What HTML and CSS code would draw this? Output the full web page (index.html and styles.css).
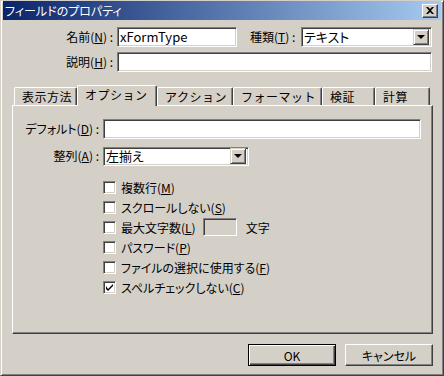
FILE: index.html
```html
<!DOCTYPE html>
<html lang="ja">
  <head>
    <meta charset="UTF-8" />
    <meta name="viewport" content="width=device-width, initial-scale=1.0" />
    <title>フィールドのプロパティ</title>
    <link rel="stylesheet" href="styles.css">
  </head>
  <body>
    <div class="window">
      <div class="titlebar">
        <span class="title">フィールドのプロパティ</span>
        <span class="close-btn">
          <svg width="8" height="7" viewBox="0 0 8 7">
            <path d="M0 0 L2 0 L4 2 L6 0 L8 0 L5 3.5 L8 7 L6 7 L4 5 L2 7 L0 7 L3 3.5 Z" fill="#000" />
          </svg>
        </span>
      </div>

      <div class="content">
        <div class="top-row">
          <label class="label top-label">名前(<u>N</u>) :</label>
          <div class="field name-field">xFormType</div>
          <label class="label type-label">種類(<u>T</u>) :</label>
          <div class="field select type-select">
            <span>テキスト</span>
            <span class="drop-btn"><i class="arrow"></i></span>
          </div>
        </div>
        <div class="top-row second">
          <label class="label top-label">説明(<u>H</u>) :</label>
          <div class="field desc-field"></div>
        </div>

        <!-- Onglets -->
        <div class="tabs">
          <div class="tab t1">表示方法</div>
          <div class="tab t2 active">オプション</div>
          <div class="tab t3">アクション</div>
          <div class="tab t4">フォーマット</div>
          <div class="tab t5">検証</div>
          <div class="tab t6">計算</div>
        </div>

        <div class="panel">
          <div class="panel-row">
            <label class="label panel-label">デフォルト(<u>D</u>) :</label>
            <div class="field default-field"></div>
          </div>
          <div class="panel-row second">
            <label class="label panel-label">整列(<u>A</u>) :</label>
            <div class="field select align-select">
              <span>左揃え</span>
              <span class="drop-btn"><i class="arrow"></i></span>
            </div>
          </div>

          <div class="checks">
            <div class="check-row">
              <span class="checkbox"></span>
              <span>複数行(<u>M</u>)</span>
            </div>
            <div class="check-row">
              <span class="checkbox"></span>
              <span>スクロールしない(<u>S</u>)</span>
            </div>
            <div class="check-row">
              <span class="checkbox"></span>
              <span>最大文字数(<u>L</u>)</span>
              <span class="field max-field"></span>
              <span class="unit">文字</span>
            </div>
            <div class="check-row">
              <span class="checkbox"></span>
              <span>パスワード(<u>P</u>)</span>
            </div>
            <div class="check-row">
              <span class="checkbox"></span>
              <span>ファイルの選択に使用する(<u>F</u>)</span>
            </div>
            <div class="check-row">
              <span class="checkbox checked">
                <svg width="7" height="7" viewBox="0 0 7 7">
                  <path d="M0 2 L0 5 L2 7 L7 2 L7 0 L2 5 Z" fill="#000" />
                </svg>
              </span>
              <span>スペルチェックしない(<u>C</u>)</span>
            </div>
          </div>
        </div>

        <div class="buttons">
          <button class="btn default">OK</button>
          <button class="btn">キャンセル</button>
        </div>
      </div>
    </div>
  </body>
</html>
```

FILE: styles.css
```css
body {
  margin: 0;
  padding: 0;
  font-family: "Noto Sans CJK JP", "Noto Sans", sans-serif;
  font-size: 12px;
  font-feature-settings: "palt";
  color: #000;
  background-color: #d4d0c8;
}
.window {
  width: 444px;
  height: 376px;
  box-sizing: border-box;
  background-color: #d4d0c8;
  border: 1px solid;
  border-color: #d4d0c8 #404040 #404040 #d4d0c8;
  box-shadow: inset 1px 1px #fff, inset -1px -1px #808080;
  overflow: hidden;
}
.titlebar {
  height: 19px;
  margin: 0 2px 0 2px;
  padding: 0 3px 0 2px;
  display: flex;
  align-items: center;
  justify-content: space-between;
  background: linear-gradient(to right, #0a246a, #a6caf0);
  color: #fff;
}
.title {
  font-size: 12px;
  line-height: 19px;
}
.close-btn {
  width: 16px;
  height: 14px;
  box-sizing: border-box;
  background-color: #d4d0c8;
  border: 1px solid;
  border-color: #fff #404040 #404040 #fff;
  box-shadow: inset -1px -1px #808080;
  display: flex;
  align-items: center;
  justify-content: center;
  padding-right: 1px;
}
.content {
  padding: 7px 0 0 11px;
}
.top-row,
.panel-row {
  display: flex;
  align-items: center;
  height: 20px;
}
.top-row.second {
  margin-top: 5px;
}
.label {
  box-sizing: border-box;
  text-align: right;
  white-space: nowrap;
  line-height: 20px;
}
.top-label {
  width: 105px;
  padding-right: 4px;
}
.type-label {
  margin-left: 13px;
  width: 51px;
  text-align: left;
}
.field {
  box-sizing: border-box;
  height: 20px;
  background-color: #fff;
  border: 1px solid;
  border-color: #808080 #fff #fff #808080;
  box-shadow: inset 1px 1px #404040, inset -1px -1px #d4d0c8;
  padding: 0 2px;
  line-height: 18px;
  font-size: 13px;
}
.name-field {
  width: 120px;
}
.type-select {
  width: 131px;
}
.desc-field {
  width: 315px;
}
.select {
  display: flex;
  justify-content: space-between;
  align-items: center;
  padding-right: 2px;
}
.drop-btn {
  width: 16px;
  height: 16px;
  box-sizing: border-box;
  background-color: #d4d0c8;
  border: 1px solid;
  border-color: #d4d0c8 #404040 #404040 #d4d0c8;
  box-shadow: inset 1px 1px #fff, inset -1px -1px #808080;
  display: flex;
  align-items: center;
  justify-content: center;
}
.arrow {
  width: 0;
  height: 0;
  border-left: 4px solid transparent;
  border-right: 4px solid transparent;
  border-top: 4px solid #000;
}
/* Onglets */
.tabs {
  display: flex;
  height: 20px;
  margin-top: 13px;
  padding-left: 2px;
  position: relative;
  z-index: 1;
}
.tab {
  box-sizing: border-box;
  height: 18px;
  margin-top: 2px;
  border-top: 1px solid #fff;
  border-left: 1px solid #fff;
  border-right: 1px solid #404040;
  border-radius: 2px 2px 0 0;
  box-shadow: inset -1px 0 #808080;
  padding-left: 7px;
  line-height: 17px;
  font-size: 12px;
  letter-spacing: 0.5px;
  font-feature-settings: normal;
  background-color: #d4d0c8;
}
.tab.active {
  height: 21px;
  margin-top: 0;
  margin-bottom: -1px;
  padding-left: 7px;
}
.t1 { width: 63px; }
.t2 { width: 80px; }
.t3 { width: 76px; }
.t4 { width: 89px; }
.t5 { width: 53px; }
.t6 { width: 55px; }
.panel {
  width: 421px;
  height: 229px;
  box-sizing: border-box;
  border: 1px solid;
  border-color: #fff #404040 #404040 #fff;
  box-shadow: inset -1px -1px #808080;
  padding-top: 13px;
}
.panel-row.second {
  margin-top: 7px;
}
.panel-label {
  width: 90px;
  padding-right: 4px;
}
.default-field {
  width: 318px;
}
.align-select {
  width: 146px;
  height: 19px;
}
.checks {
  margin-top: 11px;
  padding-left: 90px;
}
.check-row {
  display: flex;
  align-items: center;
  height: 20px;
  font-size: 12px;
}
.checkbox {
  width: 13px;
  height: 13px;
  box-sizing: border-box;
  background-color: #fff;
  border: 1px solid;
  border-color: #808080 #fff #fff #808080;
  box-shadow: inset 1px 1px #404040, inset -1px -1px #d4d0c8;
  margin-right: 5px;
  display: flex;
  align-items: center;
  justify-content: center;
}
.max-field {
  width: 34px;
  height: 18px;
  margin-left: 7px;
  background-color: #d4d0c8;
}
.unit {
  margin-left: 9px;
}
.buttons {
  display: flex;
  justify-content: flex-end;
  gap: 9px;
  width: 421px;
  margin-top: 10px;
}
.btn {
  width: 88px;
  height: 22px;
  box-sizing: border-box;
  font-family: "Noto Sans CJK JP", "Noto Sans", sans-serif;
  font-size: 12px;
  font-feature-settings: "palt";
  padding: 0;
  background-color: #d4d0c8;
  border: 1px solid;
  border-color: #fff #404040 #404040 #fff;
  box-shadow: inset -1px -1px #808080;
  color: #000;
}
.btn.default {
  border-color: #000;
  box-shadow: inset 1px 1px #fff, inset -1px -1px #404040, inset -2px -2px #808080;
}
```
